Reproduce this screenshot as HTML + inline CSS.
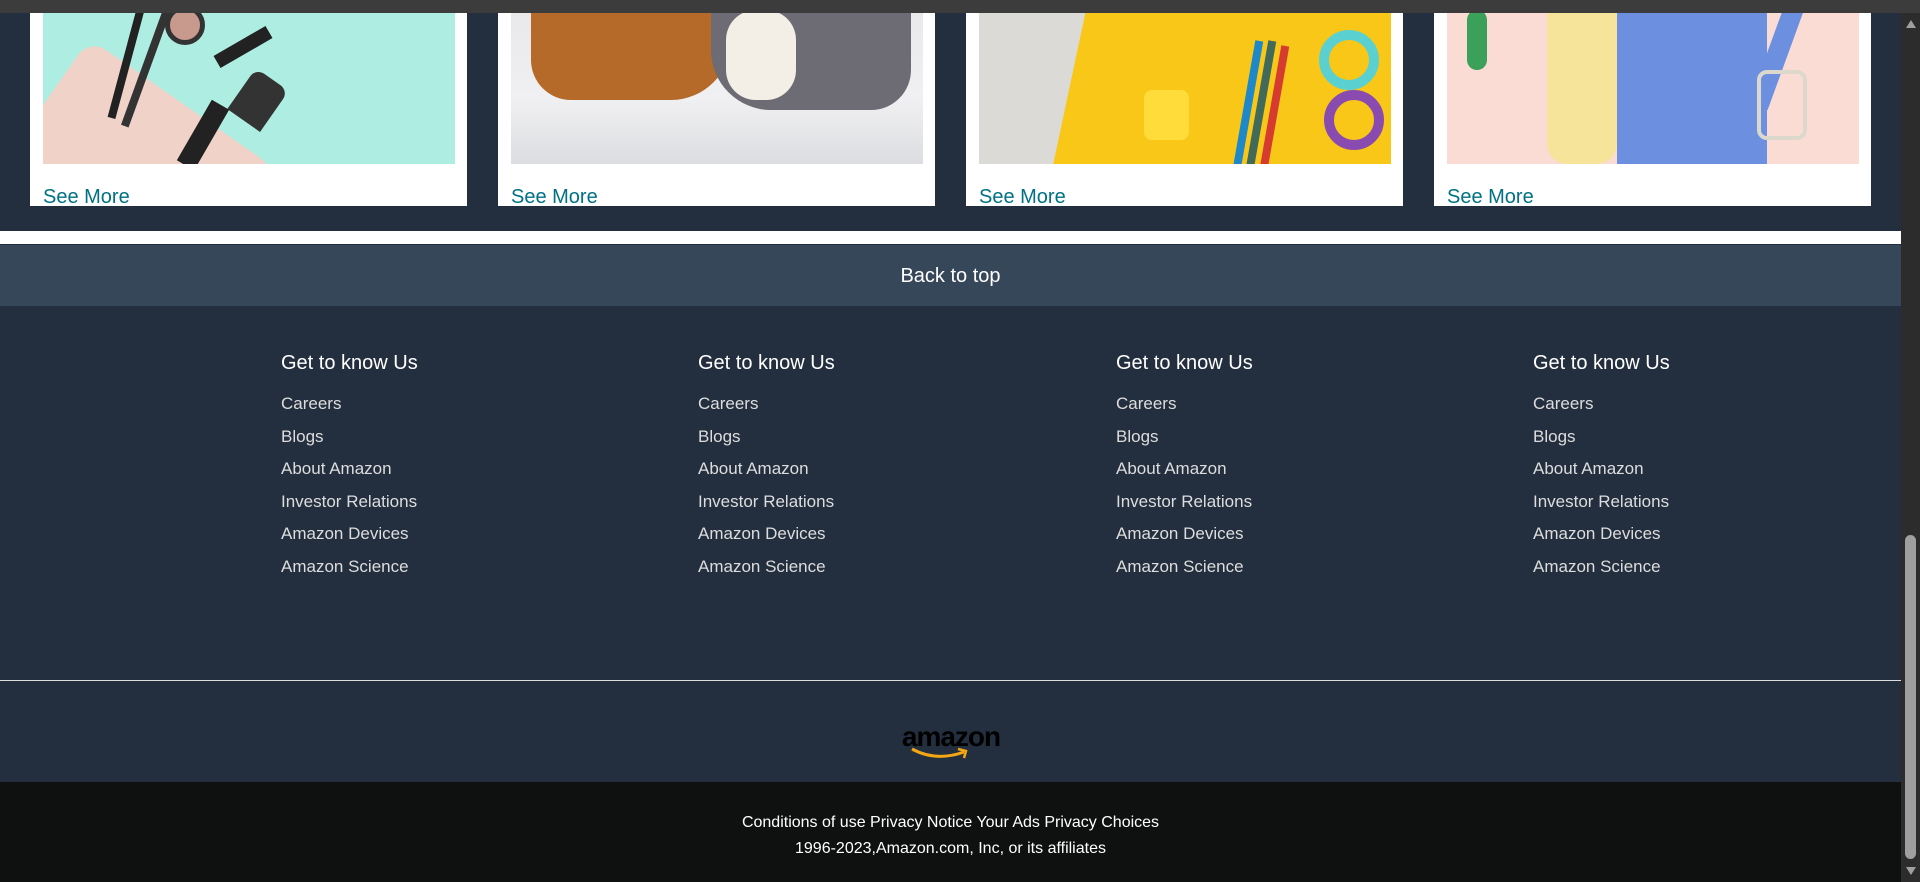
<!DOCTYPE html>
<html><head><meta charset="utf-8"><style>
*{margin:0;padding:0;box-sizing:border-box}
body{width:1920px;height:882px;overflow:hidden;background:#232f3e;font-family:"Liberation Sans",Arial,sans-serif;position:relative}
.a{position:absolute}
.card{position:absolute;top:0;width:437px;height:206px;background:#fff}
.img{position:absolute;left:13px;top:0;width:412px;height:164px;overflow:hidden}
.see{position:absolute;left:13px;top:185px;font-size:20px;color:#007185;line-height:24px}
.col{position:absolute;top:351px;color:#fff}
.col h3{font-size:20px;font-weight:normal;line-height:24px;height:43px}
.col div{font-size:17px;color:#ddd;line-height:20px;height:32.6px}
</style></head><body>
<div class="card" style="left:30px"><div class="img" style="background:#aeeee2">
<div class="a" style="left:-20px;top:90px;width:230px;height:160px;background:#f0d2c8;border-radius:20px;transform:rotate(35deg)"></div>
<div class="a" style="left:122px;top:5px;width:40px;height:40px;border-radius:50%;background:#c89a8e;border:5px solid #333"></div>
<div class="a" style="left:80px;top:0;width:8px;height:120px;background:#222;transform:rotate(15deg)"></div>
<div class="a" style="left:100px;top:0;width:8px;height:130px;background:#333;transform:rotate(20deg)"></div>
<div class="a" style="left:170px;top:40px;width:60px;height:14px;background:#222;transform:rotate(-30deg)"></div>
<div class="a" style="left:150px;top:100px;width:20px;height:70px;background:#222;transform:rotate(30deg)"></div>
<div class="a" style="left:195px;top:75px;width:40px;height:50px;background:#333;border-radius:10px 10px 0 0;transform:rotate(35deg)"></div>
</div><div class="see">See More</div></div>
<div class="card" style="left:498px"><div class="img" style="background:linear-gradient(#e8e8ea,#f0f0f2 60%,#dcdde0)">
<div class="a" style="left:20px;top:0;width:200px;height:100px;background:#b56a2a;border-radius:0 0 60px 40px"></div>
<div class="a" style="left:200px;top:0;width:200px;height:110px;background:#6d6c74;border-radius:0 0 40px 60px"></div>
<div class="a" style="left:215px;top:10px;width:70px;height:90px;background:#f4efe6;border-radius:30px"></div>
</div><div class="see">See More</div></div>
<div class="card" style="left:966px"><div class="img" style="background:#f9c718">
<div class="a" style="left:-20px;top:0;width:110px;height:180px;background:#dcdad6;transform:skewX(-12deg)"></div>
<div class="a" style="left:165px;top:90px;width:45px;height:50px;background:#ffdc3a;border-radius:8px"></div>
<div class="a" style="left:265px;top:40px;width:8px;height:130px;background:#1e88c9;transform:rotate(10deg)"></div>
<div class="a" style="left:278px;top:40px;width:8px;height:130px;background:#416a5a;transform:rotate(10deg)"></div>
<div class="a" style="left:291px;top:45px;width:8px;height:130px;background:#d53c2f;transform:rotate(10deg)"></div>
<div class="a" style="left:340px;top:30px;width:60px;height:60px;border-radius:50%;border:10px solid #5ad0d0"></div>
<div class="a" style="left:345px;top:90px;width:60px;height:60px;border-radius:50%;border:10px solid #8a4bb0"></div>
</div><div class="see">See More</div></div>
<div class="card" style="left:1434px"><div class="img" style="background:#fbdcd4">
<div class="a" style="left:20px;top:10px;width:20px;height:60px;background:#3aa05a;border-radius:10px"></div>
<div class="a" style="left:100px;top:0;width:70px;height:164px;background:#f6e49a;border-radius:0 0 20px 20px"></div>
<div class="a" style="left:170px;top:0;width:150px;height:164px;background:#6d8fe0"></div>
<div class="a" style="left:320px;top:0;width:20px;height:110px;background:#6d8fe0;transform:rotate(20deg)"></div>
<div class="a" style="left:310px;top:70px;width:50px;height:70px;border:4px solid #ddd8cc;border-radius:10px"></div>
</div><div class="see">See More</div></div>
<div class="a" style="left:0;top:0;width:1920px;height:13px;background:#3c3c3c"></div>
<div class="a" style="left:0;top:231px;width:1901px;height:13px;background:#fff"></div>
<div class="a" style="left:0;top:245px;width:1901px;height:61px;background:#37475a;color:#fff;font-size:20px;text-align:center;line-height:62px">Back to top</div>
<div class="col" style="left:281px"><h3>Get to know Us</h3><div>Careers</div><div>Blogs</div><div>About Amazon</div><div>Investor Relations</div><div>Amazon Devices</div><div>Amazon Science</div></div>
<div class="col" style="left:698px"><h3>Get to know Us</h3><div>Careers</div><div>Blogs</div><div>About Amazon</div><div>Investor Relations</div><div>Amazon Devices</div><div>Amazon Science</div></div>
<div class="col" style="left:1116px"><h3>Get to know Us</h3><div>Careers</div><div>Blogs</div><div>About Amazon</div><div>Investor Relations</div><div>Amazon Devices</div><div>Amazon Science</div></div>
<div class="col" style="left:1533px"><h3>Get to know Us</h3><div>Careers</div><div>Blogs</div><div>About Amazon</div><div>Investor Relations</div><div>Amazon Devices</div><div>Amazon Science</div></div>
<div class="a" style="left:0;top:680px;width:1901px;height:1px;background:#ddd"></div>
<div class="a" style="left:896px;top:722px;width:110px;text-align:center;font-size:28px;font-weight:bold;color:#000;letter-spacing:-1px;line-height:30px">amazon</div>
<svg class="a" style="left:908px;top:746px" width="64" height="16" viewBox="0 0 64 16"><path d="M4 3 Q28 16 56 6" stroke="#f3a712" stroke-width="3" fill="none"/><path d="M50 3 L58 5 L56 12" stroke="#f3a712" stroke-width="2.5" fill="none"/></svg>
<div class="a" style="left:0;top:782px;width:1901px;height:100px;background:#0f1111;color:#fff;font-size:16px;text-align:center">
<div style="position:absolute;top:31px;width:100%;line-height:20px">Conditions of use Privacy Notice Your Ads Privacy Choices</div>
<div style="position:absolute;top:57px;width:100%;line-height:20px">1996-2023,Amazon.com, Inc, or its affiliates</div></div>
<div class="a" style="left:1901px;top:13px;width:19px;height:869px;background:#2c2c2c"></div>
<div class="a" style="left:1905px;top:535px;width:11px;height:324px;background:#9f9f9f;border-radius:6px"></div>
<div class="a" style="left:1906px;top:20px;width:0;height:0;border-left:5px solid transparent;border-right:5px solid transparent;border-bottom:8px solid #9f9f9f"></div>
<div class="a" style="left:1906px;top:867px;width:0;height:0;border-left:5px solid transparent;border-right:5px solid transparent;border-top:8px solid #9f9f9f"></div>
</body></html>
